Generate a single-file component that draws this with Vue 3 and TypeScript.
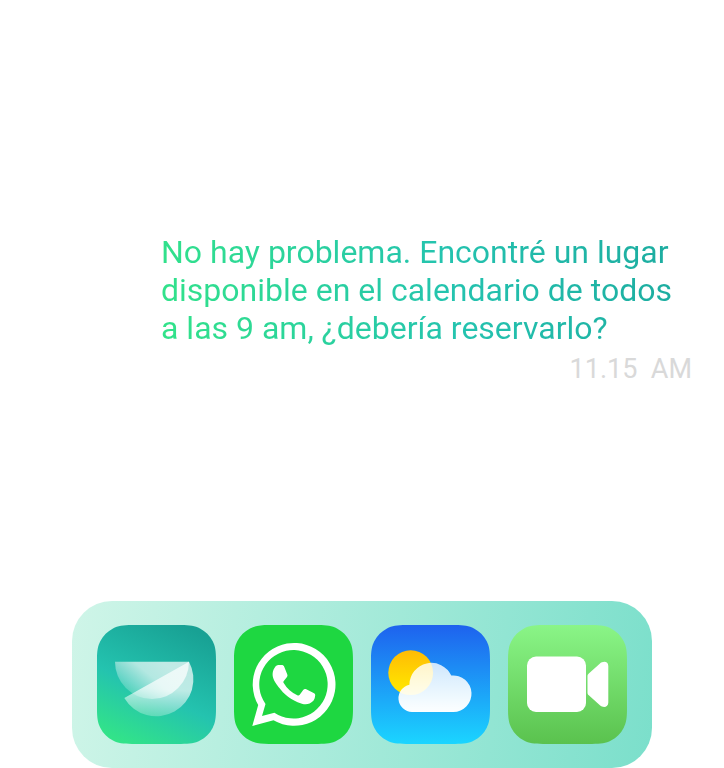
<script setup lang="ts">
const tile =
  'M35 0H84C93 0 98 .8 103 3.4C108.500 6.200 112.800 10.500 115.600 16C118.200 21 119 26 119 35V84C119 93 118.200 98 115.600 103C112.800 108.500 108.500 112.800 103 115.600C98 118.200 93 119 84 119H35C26 119 21 118.200 16 115.600C10.500 112.800 6.200 108.500 3.400 103C.8 98 0 93 0 84V35C0 26 .8 21 3.400 16C6.200 10.500 10.500 6.200 16 3.400C21 .8 26 0 35 0Z'
</script>

<template>
  <main class="screen">
    <article class="message">
      <p class="text">No hay problema. Encontré un lugar disponible en el calendario de todos a las 9 am, ¿debería reservarlo?</p>
      <time class="time" datetime="11:15">11.15&nbsp; AM</time>
    </article>

    <nav class="dock">
      <button class="app" type="button">
        <svg viewBox="0 0 119 119">
          <defs>
            <linearGradient id="bot-bg" gradientUnits="userSpaceOnUse" x1="30" y1="119" x2="86" y2="0">
              <stop offset="0" stop-color="#32e389" />
              <stop offset=".44" stop-color="#24c3af" />
              <stop offset="1" stop-color="#18a194" />
            </linearGradient>
            <linearGradient id="bowl-back" gradientUnits="userSpaceOnUse" x1="66" y1="38" x2="38" y2="72">
              <stop offset="0" stop-color="#fff" stop-opacity=".72" />
              <stop offset=".4" stop-color="#fff" stop-opacity=".66" />
              <stop offset="1" stop-color="#fff" stop-opacity=".2" />
            </linearGradient>
            <linearGradient id="bowl-front" gradientUnits="userSpaceOnUse" x1="62" y1="64" x2="60" y2="92">
              <stop offset="0" stop-color="#fff" stop-opacity=".7" />
              <stop offset="1" stop-color="#fff" stop-opacity=".24" />
            </linearGradient>
          </defs>
          <path :d="tile" fill="url(#bot-bg)" />
          <path d="M18 36.700H92A37 37.300 0 0 1 18 36.700Z" fill="url(#bowl-back)" />
          <path d="M92 36.700A37.100 37.100 0 0 1 27.300 73Z" fill="url(#bowl-front)" />
        </svg>
      </button>

      <button class="app" type="button">
        <svg viewBox="0 0 119 119">
          <path :d="tile" fill="#1ed741" />
          <path
            fill="#fff"
            fill-rule="evenodd"
            d="M18.300 101L24.200 80A41.400 41.400 0 1 1 39.500 95.300ZM28 91L40.400 87.700A34.200 34.200 0 1 0 31.500 79Z"
          />
          <path
            fill="#fff"
            d="M44.500 40H47.500C49 40 49.700 40.500 50.300 42L53.300 49.500C53.700 50.800 53.400 51.500 52.600 52.600L49.800 55.900C49.200 56.700 49.200 57.200 49.700 58.100C53.100 63.800 57.500 67.600 63.300 70.200C64.400 70.700 65 70.600 65.700 69.800L69.200 65C70 64 70.700 63.700 71.800 64.100L79.600 67.900C81 68.600 81.300 69 81.200 70.600C80.900 74.700 79.100 77 75.600 78.500C71.900 79.900 68.400 79.200 63.600 77.200C54 73.300 47.700 66.700 42.500 59.300C38.800 54 38 50.300 39 46.300C39.600 43.800 41.300 41.500 42.300 40.700C42.900 40.200 43.700 40 44.500 40Z"
          />
        </svg>
      </button>

      <button class="app" type="button">
        <svg viewBox="0 0 119 119">
          <defs>
            <linearGradient id="sky" x1="0" y1="0" x2="0" y2="1">
              <stop offset="0" stop-color="#1e62ee" />
              <stop offset="1" stop-color="#1bd5ff" />
            </linearGradient>
            <linearGradient id="sun" x1="0" y1="0" x2="0" y2="1">
              <stop offset="0" stop-color="#ffbb05" />
              <stop offset=".75" stop-color="#ffe000" />
              <stop offset="1" stop-color="#ffe600" />
            </linearGradient>
            <linearGradient id="cloud" x1="0" y1="0" x2="0" y2="1">
              <stop offset="0" stop-color="#fff" stop-opacity=".79" />
              <stop offset="1" stop-color="#fff" stop-opacity=".99" />
            </linearGradient>
          </defs>
          <path :d="tile" fill="url(#sky)" />
          <circle cx="39.700" cy="47.700" r="22.400" fill="url(#sun)" />
          <path
            fill="url(#cloud)"
            d="M41 87A13.800 13.800 0 0 1 38.400 59.700A22 22 0 0 1 80.300 50.500A18.300 18.300 0 1 1 82.300 87Z"
          />
        </svg>
      </button>

      <button class="app" type="button">
        <svg viewBox="0 0 119 119">
          <defs>
            <linearGradient id="video-bg" x1="0" y1="0" x2="0" y2="1">
              <stop offset="0" stop-color="#8af587" />
              <stop offset="1" stop-color="#5ac24e" />
            </linearGradient>
          </defs>
          <path :d="tile" fill="url(#video-bg)" />
          <rect x="19" y="31.500" width="59" height="55.500" rx="9" fill="#fff" />
          <path
            fill="#fff"
            d="M79.500 51.200C79.500 50 79.800 49.300 80.800 48.400L91.700 38.700C94.700 36 100.300 35.800 100.300 41V77.600C100.300 82.700 94.900 83 91.900 80.300L80.800 70.300C79.800 69.400 79.500 68.700 79.500 67.500Z"
          />
        </svg>
      </button>
    </nav>
  </main>
</template>

<style>
body {
  margin: 0;
  background: #fff;
}
</style>

<style scoped>
.screen {
  box-sizing: border-box;
  min-height: 100vh;
  display: flex;
  flex-direction: column;
  justify-content: space-between;
  padding-top: 233px;
  font-family: Roboto, 'Liberation Sans', sans-serif;
}

.message {
  display: flex;
  flex-direction: column;
  align-items: flex-end;
  padding: 0 32px 0 161px;
}

.text {
  align-self: flex-start;
  max-width: 520px;
  margin: 0;
  font-size: 32px;
  line-height: 38px;
  color: transparent;
  background: linear-gradient(78deg, #32e389 0%, #24c3af 56%, #1cab9f 100%);
  background-clip: text;
  -webkit-background-clip: text;
}

.time {
  margin-top: 6px;
  font-size: 27px;
  line-height: 32px;
  color: #d9d9d9;
}

.dock {
  display: flex;
  align-self: center;
  gap: 18px;
  padding: 24px 25px;
  border-radius: 40px;
  background: linear-gradient(98deg, #cff5e8 0%, #7bdfcb 100%);
}

.app {
  display: block;
  width: 119px;
  height: 119px;
  padding: 0;
  border: 0;
  background: none;
  cursor: pointer;
}

.app svg {
  display: block;
  width: 100%;
  height: 100%;
}
</style>
